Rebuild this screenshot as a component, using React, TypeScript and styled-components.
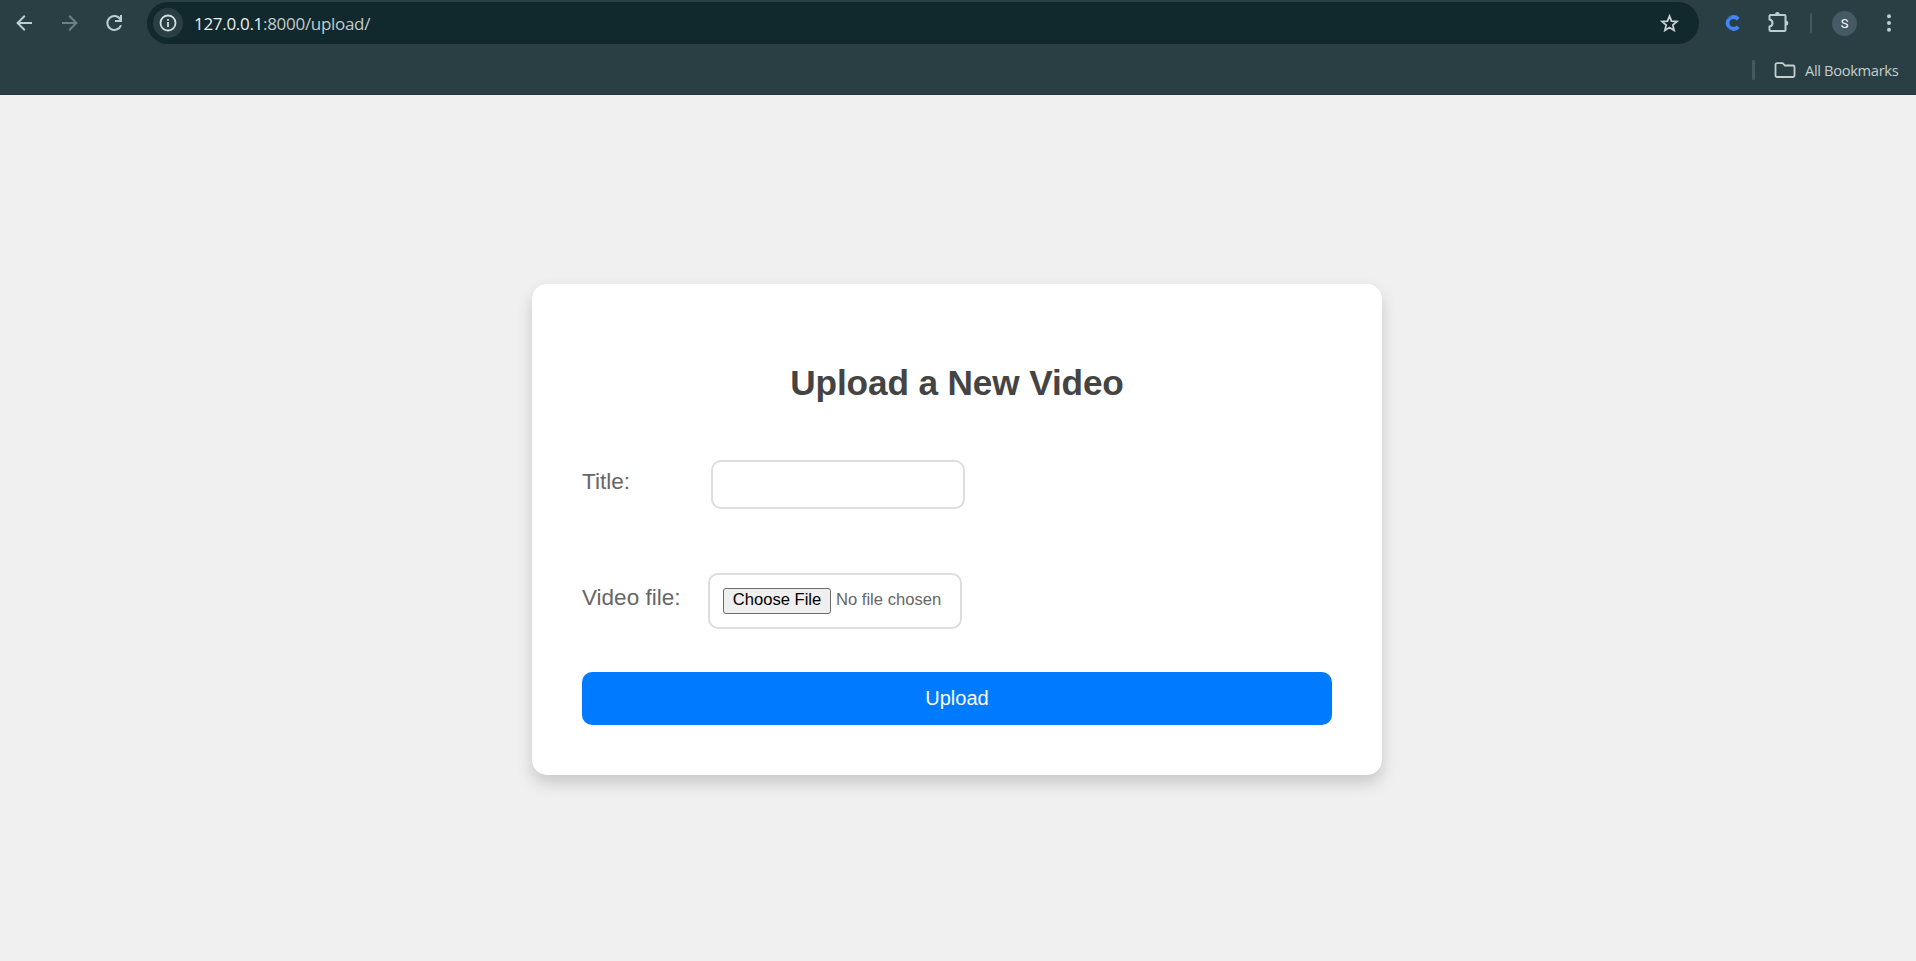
import React from 'react';
import styled, { createGlobalStyle } from 'styled-components';

const GlobalStyle = createGlobalStyle`
  * { box-sizing: border-box; }
  body { margin: 0; background: #f0f0f0; font-family: Arial, "Liberation Sans", sans-serif; }
`;

const Screen = styled.div`
  height: 961px;
  display: flex;
  flex-direction: column;
  overflow: hidden;
`;

const BrowserChrome = styled.header`
  height: 95px;
  flex: none;
  background: #293f43;
  border-bottom: 1px solid #22383c;
  font-family: "Open Sans", "Noto Sans", sans-serif;
`;

const Toolbar = styled.div`
  height: 46px;
  display: flex;
  align-items: center;
`;

const NavButtons = styled.div`
  width: 147px;
  height: 46px;
  padding-left: 12px;
  display: flex;
  align-items: center;
  gap: 21px;
`;

const Icon = styled.svg<{ $size?: number }>`
  display: block;
  flex: none;
  width: ${(p) => p.$size ?? 24}px;
  height: ${(p) => p.$size ?? 24}px;
`;

const PuzzleIcon = styled(Icon)`
  margin: 0 20px 0 22px;
`;

const FolderIcon = styled(Icon)`
  margin-left: 18px;
`;

const AddressBar = styled.div`
  width: 1552px;
  height: 42px;
  padding: 0 18px 0 6px;
  display: flex;
  align-items: center;
  border-radius: 21px;
  background: #11292d;
`;

const SiteInfo = styled.span`
  width: 30px;
  height: 30px;
  display: flex;
  align-items: center;
  justify-content: center;
  border-radius: 50%;
  background: #293f43;
`;

const Address = styled.span`
  flex: 1;
  margin-left: 11px;
  padding-top: 1px;
  color: #c3cbcc;
  font-size: 17px;
  line-height: 24px;
  letter-spacing: -0.3px;
`;

const Host = styled.span`
  color: #e9eeee;
`;

const Actions = styled.div`
  flex: 1;
  display: flex;
  align-items: center;
  padding-left: 21px;
`;

const Divider = styled.span<{ $width: number }>`
  width: ${(p) => p.$width}px;
  height: 20px;
  border-radius: 1px;
  background: #44595e;
`;

const Avatar = styled.span`
  width: 25px;
  height: 25px;
  margin: 0 20px;
  display: flex;
  align-items: center;
  justify-content: center;
  border-radius: 50%;
  background: #455a64;
  color: #fff;
  font-family: Roboto, sans-serif;
  font-size: 13px;
`;

const BookmarksBar = styled.div`
  height: 47px;
  padding-right: 16px;
  display: flex;
  align-items: center;
  justify-content: flex-end;
`;

const BookmarksLabel = styled.span`
  width: 95px;
  margin-left: 8px;
  color: #c5cdce;
  font-size: 14.7px;
  line-height: 20px;
  letter-spacing: -0.35px;
  white-space: nowrap;
`;

const Page = styled.main`
  flex: 1;
  display: flex;
  justify-content: center;
  align-items: flex-start;
  padding: 189px 2px 0 0;
`;

const Card = styled.form`
  width: 850px;
  height: 491px;
  padding: 50px;
  display: flex;
  flex-direction: column;
  border-radius: 15px;
  background: #fff;
  box-shadow: 0 8px 16px rgba(0, 0, 0, 0.17);
`;

const Heading = styled.h2`
  margin: 29px 0 0;
  height: 40px;
  line-height: 40px;
  color: #444;
  font-size: 35.2px;
  letter-spacing: -0.12px;
  text-align: center;
`;

const Field = styled.div<{ $top: number; $height: number; $labelWidth: number }>`
  height: ${(p) => p.$height}px;
  margin-top: ${(p) => p.$top}px;
  display: grid;
  grid-template-columns: ${(p) => p.$labelWidth}px 254px;
`;

const Label = styled.label<{ $top: number }>`
  padding-top: ${(p) => p.$top}px;
  color: #666;
  font-size: 22.5px;
  line-height: 26px;
`;

const TextInput = styled.input`
  width: 254px;
  height: 100%;
  padding: 12px;
  border: 2px solid #ddd;
  border-radius: 10px;
  outline: none;
  background: #fff;
  font: 16.8px "Liberation Sans", Arial, sans-serif;
`;

const FilePicker = styled.div`
  padding: 13px;
  display: flex;
  align-items: flex-start;
  border: 2px solid #ddd;
  border-radius: 10px;
  color: #666;
  font-size: 16.6px;
  line-height: 24px;
  white-space: nowrap;
`;

const ChooseButton = styled.button`
  width: 108px;
  height: 26px;
  margin-right: 5px;
  padding: 0 0 2px;
  border: 1px solid #6b6b6b;
  border-radius: 3px;
  background: #efefef;
  color: #000;
  font: 16.6px/22px "Liberation Sans", Arial, sans-serif;
`;

const SubmitButton = styled.button`
  height: 53px;
  margin-top: 43px;
  padding: 0;
  border: 0;
  border-radius: 10px;
  background: #007bff;
  color: #fff;
  font: 20px "Liberation Sans", Arial, sans-serif;
`;

export default function App() {
  return (
    <Screen>
      <GlobalStyle />
      <BrowserChrome>
        <Toolbar>
          <NavButtons>
            <Icon viewBox="0 0 24 24" fill="none" stroke="#b8cfd3" strokeWidth="2">
              <path d="M20 12H6.5M12.8 4.8 5.6 12l7.2 7.2" />
            </Icon>
            <Icon viewBox="0 0 24 24" fill="none" stroke="#6a8186" strokeWidth="2">
              <path d="M5 12h14M12.2 4.8l7.2 7.2-7.2 7.2" />
            </Icon>
            <Icon viewBox="0 0 24 24" fill="none" stroke="#b8cfd3" strokeWidth="2">
              <path d="M19 14.2A7 7 0 1 1 18.4 8.4M19 4V10h-6" />
            </Icon>
          </NavButtons>
          <AddressBar>
            <SiteInfo>
              <Icon $size={18} viewBox="0 0 18 18" fill="none" stroke="#d5dcdd" strokeWidth="1.8">
                <circle cx="9" cy="9" r="7.5" />
                <path d="M9 8v5M9 5v1.8" />
              </Icon>
            </SiteInfo>
            <Address>
              <Host>127.0.0.1</Host>:8000/upload/
            </Address>
            <Icon viewBox="0 0 24 24" fill="none" stroke="#c9d0d1" strokeWidth="1.8">
              <path d="m12.5 5.2 2 5 5.4.4-4.1 3.5 1.3 5.3-4.6-2.8-4.6 2.8 1.3-5.3-4.1-3.5 5.4-.4z" />
            </Icon>
          </AddressBar>
          <Actions>
            <Icon viewBox="0 0 24 24" fill="none" stroke="#4285f4">
              <path d="M18.2 8.2A6 6 0 1 0 18.2 15.8" strokeWidth="3.8" />
              <path d="M7 8.2 11.5 4.8M6 15.5l5.8 4" stroke="#293f43" strokeWidth=".5" />
            </Icon>
            <PuzzleIcon viewBox="0 0 24 24" fill="none" stroke="#b8cfd3" strokeWidth="2">
              <path d="M4.5 4h14a1 1 0 0 1 1 1v14a1 1 0 0 1-1 1h-14a1 1 0 0 1-1-1v-3.5c4-1 4-6.2 0-7.1V5a1 1 0 0 1 1-1z" strokeLinejoin="round" />
              <path d="M9 3.5a2.4 2.4 0 0 1 4.8 0M20 9.8a2.4 2.4 0 0 1 0 4.8" fill="#b8cfd3" stroke="none" />
            </PuzzleIcon>
            <Divider $width={2} />
            <Avatar>S</Avatar>
            <Icon viewBox="0 0 24 24" fill="#b8cfd3">
              <circle cx="12" cy="5.2" r="2" />
              <circle cx="12" cy="12" r="2" />
              <circle cx="12" cy="18.8" r="2" />
            </Icon>
          </Actions>
        </Toolbar>
        <BookmarksBar>
          <Divider $width={3} />
          <FolderIcon viewBox="0 0 24 24" fill="none" stroke="#c5cdce" strokeWidth="1.8">
            <path d="M4 5.2h5.7l2.2 2.3H20a1.5 1.5 0 0 1 1.5 1.5v8.5A1.5 1.5 0 0 1 20 19H4a1.5 1.5 0 0 1-1.5-1.5V6.7A1.5 1.5 0 0 1 4 5.2z" />
          </FolderIcon>
          <BookmarksLabel>All Bookmarks</BookmarksLabel>
        </BookmarksBar>
      </BrowserChrome>
      <Page>
        <Card>
          <Heading>Upload a New Video</Heading>
          <Field $top={57} $height={49} $labelWidth={129}>
            <Label $top={9} htmlFor="title">Title:</Label>
            <TextInput id="title" />
          </Field>
          <Field $top={64} $height={56} $labelWidth={126}>
            <Label $top={12}>Video file:</Label>
            <FilePicker>
              <ChooseButton type="button">Choose File</ChooseButton>
              No file chosen
            </FilePicker>
          </Field>
          <SubmitButton type="button">Upload</SubmitButton>
        </Card>
      </Page>
    </Screen>
  );
}
